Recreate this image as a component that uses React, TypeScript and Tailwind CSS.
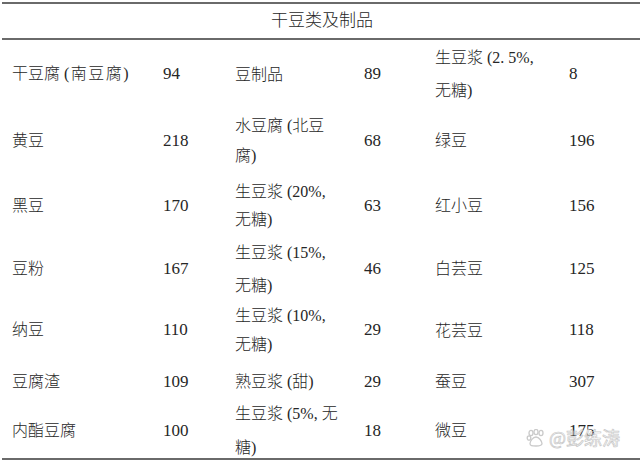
import React from "react";

type Row = {
  h: string;
  lead: string;
  a: React.ReactNode;
  an: string;
  b: React.ReactNode;
  bn: string;
  c: React.ReactNode;
  cn: string;
};

const rows: Row[] = [
  {
    h: "h-[68px]",
    lead: "leading-[33px]",
    a: (
      <>
        干豆腐 <span className="tracking-[1.5px]">(南豆腐)</span>
      </>
    ),
    an: "94",
    b: "豆制品",
    bn: "89",
    c: (
      <>
        生豆浆 (2. 5%,
        <br />
        无糖)
      </>
    ),
    cn: "8",
  },
  {
    h: "h-[66px]",
    lead: "leading-[30px]",
    a: "黄豆",
    an: "218",
    b: (
      <>
        水豆腐 (北豆
        <br />
        腐)
      </>
    ),
    bn: "68",
    c: "绿豆",
    cn: "196",
  },
  {
    h: "h-[63px]",
    lead: "leading-[28px]",
    a: "黑豆",
    an: "170",
    b: (
      <>
        生豆浆 (20%,
        <br />
        无糖)
      </>
    ),
    bn: "63",
    c: "红小豆",
    cn: "156",
  },
  {
    h: "h-[63px]",
    lead: "leading-[33px]",
    a: "豆粉",
    an: "167",
    b: (
      <>
        生豆浆 (15%,
        <br />
        无糖)
      </>
    ),
    bn: "46",
    c: "白芸豆",
    cn: "125",
  },
  {
    h: "h-[60px]",
    lead: "leading-[29px]",
    a: "纳豆",
    an: "110",
    b: (
      <>
        生豆浆 (10%,
        <br />
        无糖)
      </>
    ),
    bn: "29",
    c: "花芸豆",
    cn: "118",
  },
  {
    h: "h-[44px]",
    lead: "leading-[30px]",
    a: "豆腐渣",
    an: "109",
    b: "熟豆浆 (甜)",
    bn: "29",
    c: "蚕豆",
    cn: "307",
  },
  {
    h: "h-[54px]",
    lead: "leading-[34px]",
    a: "内酯豆腐",
    an: "100",
    b: (
      <>
        生豆浆 (5%, 无
        <br />
        糖)
      </>
    ),
    bn: "18",
    c: "微豆",
    cn: "175",
  },
];

function Paw() {
  return (
    <svg width="20" height="18" viewBox="0 0 20 18" fill="none" stroke="#cacaca" strokeWidth="1.3">
      <ellipse cx="5" cy="4" rx="2" ry="2.6" />
      <ellipse cx="10" cy="3" rx="2" ry="2.6" />
      <ellipse cx="15" cy="4" rx="2" ry="2.6" />
      <ellipse cx="3" cy="9" rx="1.8" ry="2.2" />
      <path d="M10 8c-3 0-6 4-6 6.5S6 17 10 17s6-.5 6-2.5S13 8 10 8z" />
    </svg>
  );
}

export default function App() {
  return (
    <div
      className="relative w-[640px] h-[462px] overflow-hidden bg-white text-[#262626]"
      style={{ fontFamily: '"Liberation Serif", "Noto Sans CJK SC", serif' }}
    >
      <div className="pt-[2px] pl-[2px]">
        <div className="h-[2px] bg-[#6a6a6a]" />
        <div className="h-[34px] flex items-center justify-center text-[17px] pl-[2px] font-light">干豆类及制品</div>
        <div className="h-[2px] bg-[#6a6a6a]" />
        {rows.map((r, i) => (
          <div key={i} className={`flex items-center ${r.h} text-[16px] font-light`}>
            <div className="w-[161px] pl-[10px]">{r.a}</div>
            <div className="w-[72px] text-[17px]">{r.an}</div>
            <div className={`w-[129px] ${r.lead}`}>{r.b}</div>
            <div className="w-[71px] text-[17px]">{r.bn}</div>
            <div className={`w-[134px] ${r.lead}`}>{r.c}</div>
            <div className="flex-1 text-[17px]">{r.cn}</div>
          </div>
        ))}
        <div className="h-[2px] bg-[#6a6a6a]" />
      </div>
      <div className="pointer-events-none absolute left-[526px] top-[424px] flex items-center gap-[3px] text-[18px] text-transparent [-webkit-text-stroke:0.7px_#c8c8c8]">
        <Paw />
        <span style={{ fontFamily: '"Noto Sans CJK SC", sans-serif' }}>@彭练涛</span>
      </div>
    </div>
  );
}
